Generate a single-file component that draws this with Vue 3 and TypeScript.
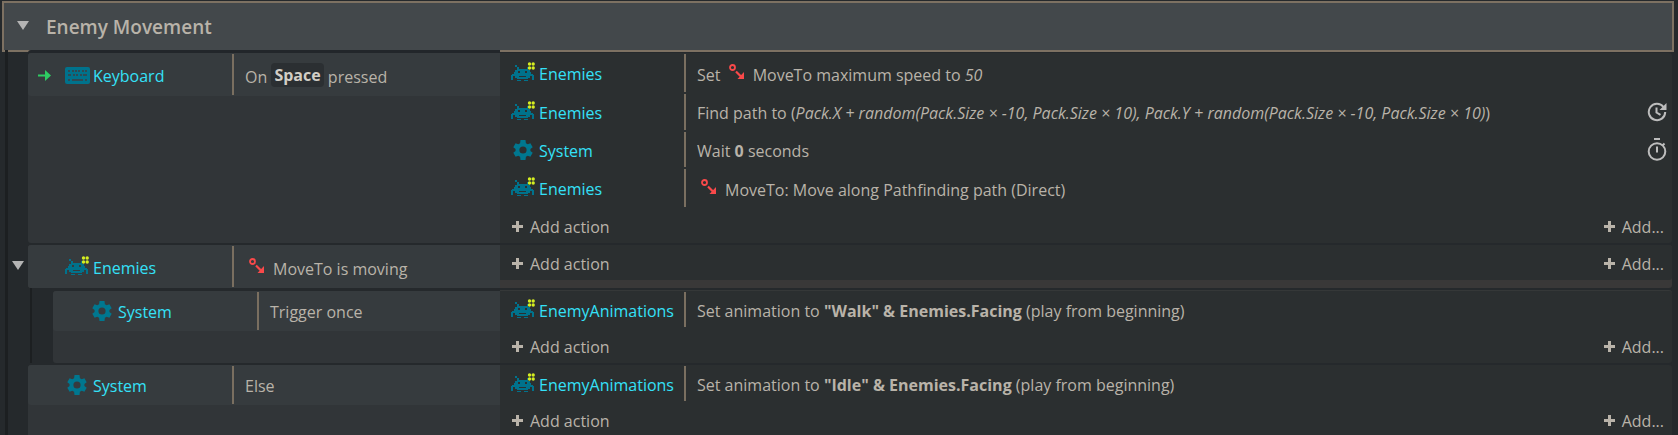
<script setup lang="ts">
import { ref } from 'vue'

type Kind = 'text' | 'strong' | 'em' | 'key' | 'behavior'
interface Part { kind: Kind; value: string }
interface Line {
  icon: 'keyboard' | 'invader' | 'gear'
  object: string
  parts: Part[]
  trigger?: boolean
  badge?: 'async' | 'timer'
}
interface EventBlock {
  id: number
  condition: Line
  actions: Line[]
  sub?: boolean
  parent?: boolean
}

const t = (value: string): Part => ({ kind: 'text', value })
const b = (value: string): Part => ({ kind: 'strong', value })
const i = (value: string): Part => ({ kind: 'em', value })
const key = (value: string): Part => ({ kind: 'key', value })
const behavior: Part = { kind: 'behavior', value: '' }

const groupOpen = ref(true)
const subOpen = ref(true)

const events: EventBlock[] = [
  {
    id: 1,
    condition: { icon: 'keyboard', object: 'Keyboard', trigger: true, parts: [t('On '), key('Space'), t(' pressed')] },
    actions: [
      { icon: 'invader', object: 'Enemies', parts: [t('Set '), behavior, t('MoveTo maximum speed to '), i('50')] },
      {
        icon: 'invader',
        object: 'Enemies',
        parts: [
          t('Find path to ('),
          i('Pack.X + random(Pack.Size × -10, Pack.Size × 10), Pack.Y + random(Pack.Size × -10, Pack.Size × 10)'),
          t(')'),
        ],
        badge: 'async',
      },
      { icon: 'gear', object: 'System', parts: [t('Wait '), b('0'), t(' seconds')], badge: 'timer' },
      { icon: 'invader', object: 'Enemies', parts: [behavior, t('MoveTo: Move along Pathfinding path (Direct)')] },
    ],
  },
  {
    id: 2,
    parent: true,
    condition: { icon: 'invader', object: 'Enemies', parts: [behavior, t('MoveTo is moving')] },
    actions: [],
  },
  {
    id: 3,
    sub: true,
    condition: { icon: 'gear', object: 'System', parts: [t('Trigger once')] },
    actions: [
      {
        icon: 'invader',
        object: 'EnemyAnimations',
        parts: [t('Set animation to '), b('"Walk" & Enemies.Facing'), t(' (play from beginning)')],
      },
    ],
  },
  {
    id: 4,
    condition: { icon: 'gear', object: 'System', parts: [t('Else')] },
    actions: [
      {
        icon: 'invader',
        object: 'EnemyAnimations',
        parts: [t('Set animation to '), b('"Idle" & Enemies.Facing'), t(' (play from beginning)')],
      },
    ],
  },
]

const isTall = (line: Line) => line.parts.some((p) => p.kind === 'behavior' || p.kind === 'key')
</script>

<template>
  <main class="sheet">
    <svg class="defs" aria-hidden="true">
      <symbol id="keyboard" viewBox="0 0 25 17">
        <rect width="25" height="17" rx="2" fill="#00728c" />
        <path
          d="M3 3h2v2H3zM7 3h2v2H7zM10 3h2v2h-2zM13 3h2v2h-2zM17 3h2v2h-2zM20 3h2v2h-2zM3 7h3v2H3zM8 7h2v2H8zM11 7h2v2h-2zM15 7h2v2h-2zM18 7h4v2h-4zM3 12h2v2H3zM7 12h11v2H7zM20 12h2v2h-2z"
          fill="#2f4a54"
        />
      </symbol>
      <symbol id="invader" viewBox="0 0 24 20">
        <path
          fill="#00728c"
          fill-rule="evenodd"
          d="M4 3h2v2H4zM6 5h2v2H6zM16 5h2v2h-2zM6 7h11v1h2v2h1v2h2v1h1v5h-2v-4h-2v2h-2v1H6v-1H4v-2H2v4H0v-5h1v-1h2v-2h1V8h2zM7 9v2h2V9zM14 9v2h2V9zM8 14v1h7v-1zM6 18h4v1H6zM13 18h4v1h-4z"
        />
        <g fill="#d5ee21">
          <circle cx="18.500" cy="2" r="1.700" /><circle cx="22.200" cy="2" r="1.700" />
          <circle cx="18.500" cy="6" r="1.700" /><circle cx="22.200" cy="6" r="1.700" />
        </g>
      </symbol>
      <symbol id="gear" viewBox="0 0 24 24">
        <path
          fill="#00778f"
          d="M19.400 13a7.500 7.500 0 0 0 0-2l2.300-1.800-2.300-4-2.700 1.100a7.400 7.400 0 0 0-1.800-1L14.500 2h-5l-.4 3.300a7.400 7.400 0 0 0-1.800 1L4.600 5.200l-2.300 4L4.600 11a7.500 7.500 0 0 0 0 2l-2.300 1.800 2.300 4 2.700-1.100a7.400 7.400 0 0 0 1.800 1l.4 3.300h5l.4-3.300a7.400 7.400 0 0 0 1.800-1l2.700 1.100 2.300-4zM12 15.600a3.600 3.600 0 1 1 0-7.200 3.600 3.600 0 0 1 0 7.200z"
        />
      </symbol>
      <symbol id="behavior" viewBox="0 0 16 16">
        <circle cx="3.500" cy="3.500" r="2.500" fill="none" stroke="#f9494a" stroke-width="1.800" />
        <path d="M7 7.500l5 5" stroke="#f9494a" stroke-width="2.200" />
        <path d="M15 8v7H8.500z" fill="#f9494a" />
      </symbol>
      <symbol id="trigger" viewBox="0 0 13 11">
        <path d="M0 4.500h7V0l6 5.500L7 11V6.500H0z" fill="#2ecc62" />
      </symbol>
      <symbol id="async" viewBox="0 0 20 20">
        <path d="M16.500 5A8.200 8.200 0 1 0 18.200 10" fill="none" stroke="#bdbdbd" stroke-width="2" />
        <path d="M19.500 1v7h-7z" fill="#bdbdbd" />
        <path d="M9.500 5.500v5l4 2.300" fill="none" stroke="#bdbdbd" stroke-width="2" />
      </symbol>
      <symbol id="timer" viewBox="0 0 20 23">
        <circle cx="10" cy="13.500" r="8.300" fill="none" stroke="#bdbdbd" stroke-width="2" />
        <path d="M7 1h6M10 8.500v6M15.500 7.500l2-2" stroke="#bdbdbd" stroke-width="2" />
      </symbol>
      <symbol id="triangle" viewBox="0 0 12 9">
        <path d="M0 0h12L6 9z" fill="#b4b4b4" />
      </symbol>
    </svg>

    <header class="group">
      <button class="toggle" type="button" aria-label="Toggle group" :aria-expanded="groupOpen" @click="groupOpen = !groupOpen">
        <svg class="triangle"><use href="#triangle" /></svg>
      </button>
      <h1>Enemy Movement</h1>
    </header>

    <section v-if="groupOpen" class="events">
      <template v-for="event in events" :key="event.id">
        <article v-if="!event.sub || subOpen" class="event" :class="{ sub: event.sub, parent: event.parent }">
          <button
            v-if="event.parent"
            class="toggle branch"
            type="button"
            aria-label="Toggle sub-events"
            :aria-expanded="subOpen"
            @click="subOpen = !subOpen"
          >
            <svg class="triangle"><use href="#triangle" /></svg>
          </button>
          <div class="conditions">
            <div class="condition" :class="{ tall: isTall(event.condition) }">
              <div class="object">
                <svg v-if="event.condition.trigger" class="trigger"><use href="#trigger" /></svg>
                <svg :class="event.condition.icon"><use :href="'#' + event.condition.icon" /></svg>
                <span>{{ event.condition.object }}</span>
              </div>
              <p class="description">
                <template v-for="(part, n) in event.condition.parts" :key="n">
                  <svg v-if="part.kind === 'behavior'" class="behavior"><use href="#behavior" /></svg>
                  <kbd v-else-if="part.kind === 'key'">{{ part.value }}</kbd>
                  <span v-else>{{ part.value }}</span>
                </template>
              </p>
            </div>
          </div>
          <div class="actions">
            <div
              v-for="(action, n) in event.actions"
              :key="n"
              class="action"
              :class="{ tall: isTall(action) }"
            >
              <div class="object">
                <svg :class="action.icon"><use :href="'#' + action.icon" /></svg>
                <span>{{ action.object }}</span>
              </div>
              <p class="description">
                <template v-for="(part, m) in action.parts" :key="m">
                  <svg v-if="part.kind === 'behavior'" class="behavior"><use href="#behavior" /></svg>
                  <em v-else-if="part.kind === 'em'">{{ part.value }}</em>
                  <strong v-else-if="part.kind === 'strong'">{{ part.value }}</strong>
                  <span v-else>{{ part.value }}</span>
                </template>
              </p>
              <svg v-if="action.badge" :class="action.badge"><use :href="'#' + action.badge" /></svg>
            </div>
            <div class="add-row">
              <button class="add" type="button"><span class="plus"></span>Add action</button>
              <button class="add" type="button"><span class="plus"></span>Add...</button>
            </div>
          </div>
        </article>
      </template>
    </section>
  </main>
</template>

<style>
body {
  margin: 0;
  background: #25292c;
}
</style>

<style scoped>
.sheet {
  box-sizing: border-box;
  display: flex;
  flex-direction: column;
  height: 100vh;
  overflow: hidden;
  padding: 1px 4px 0 2px;
  background: #25292c;
  color: #b9b3a9;
  font-family: "Open Sans", "Noto Sans", sans-serif;
  font-size: 16px;
  line-height: 22px;
}
.defs {
  position: absolute;
  width: 0;
  height: 0;
}
svg {
  display: block;
  flex: none;
}
button {
  border: 0;
  padding: 0;
  background: none;
  color: inherit;
  font: inherit;
  cursor: pointer;
}
.group {
  flex: none;
  box-sizing: border-box;
  display: flex;
  align-items: center;
  height: 51px;
  padding: 0 0 0 13px;
  border: 2px solid #7d7162;
  background: #43484b;
}
.group h1 {
  margin: 0 0 0 17px;
  font-size: 19px;
  line-height: 28px;
  font-weight: 600;
}
.group .triangle {
  margin-bottom: 3px;
}
.triangle {
  width: 12px;
  height: 9px;
}
.events {
  position: relative;
  flex: none;
  display: flex;
  flex-direction: column;
  gap: 2px;
  margin: -2px 2px 0 3px;
  padding: 3px 0 0 20px;
  border-left: 3px solid #1c1f21;
}
.event {
  position: relative;
  display: flex;
  border-radius: 3px;
}
.event:first-child .conditions {
  box-shadow: 0 -3px 0 #22262a;
}
.sub {
  margin: 1px 0 0 25px;
}
.sub::before {
  content: "";
  position: absolute;
  top: -3px;
  bottom: 0;
  left: -23px;
  width: 2px;
  background: #1c1f21;
}
.sub .actions {
  box-shadow: 0 -1px 0 #353838;
}
.parent {
  background: #393838;
}
.branch {
  position: absolute;
  top: 16px;
  left: -16px;
}
.conditions {
  flex: none;
  width: 472px;
  border-radius: 3px 0 0 3px;
  background: #313538;
}
.sub .conditions {
  width: 447px;
}
.condition,
.action {
  display: flex;
  align-items: center;
}
.condition {
  height: 40px;
  border-radius: 3px 0 0 3px;
  background: #363b3e;
}
.condition.tall {
  height: 43px;
}
.object {
  position: relative;
  box-sizing: border-box;
  display: flex;
  align-items: center;
  gap: 4px;
  padding-top: 2px;
  color: #34e1f8;
}
.condition .object {
  width: 204px;
  padding-left: 37px;
}
.action .object {
  width: 184px;
  padding-left: 11px;
}
.description {
  box-sizing: border-box;
  flex: 1;
  display: flex;
  align-items: center;
  align-self: stretch;
  min-width: 0;
  margin: 1px 0;
  padding: 2px 0 0 11px;
  border-left: 2px solid #7a6f60;
  white-space: pre;
}
.tall .description {
  padding-top: 4px;
}
kbd {
  margin-top: -4px;
  padding: 1px 3px;
  border-radius: 4px;
  background: #2b2f32;
  color: #d2cec6;
  font: inherit;
  font-weight: 700;
}
.keyboard {
  width: 25px;
  height: 17px;
  margin-right: -1px;
}
.invader {
  width: 24px;
  height: 20px;
  margin-bottom: 4px;
}
.gear {
  width: 24px;
  height: 24px;
  margin-bottom: 2px;
}
.trigger {
  position: absolute;
  left: 10px;
  width: 13px;
  height: 11px;
}
.behavior {
  width: 16px;
  height: 16px;
  margin: 0 8px 6px 4px;
}
.actions {
  flex: 1;
  min-width: 0;
  align-self: flex-start;
  border-radius: 0 3px 3px 0;
  background: #2b2f30;
}
.action {
  height: 37px;
}
.action:nth-child(2) {
  height: 38px;
}
.action.tall {
  height: 40px;
}
.async {
  width: 20px;
  height: 20px;
  margin-right: 5px;
}
.timer {
  width: 20px;
  height: 23px;
  margin-right: 5px;
}
.add-row {
  box-sizing: border-box;
  display: flex;
  align-items: center;
  justify-content: space-between;
  height: 35px;
  padding: 2px 8px 0 12px;
}
.add {
  display: flex;
  align-items: center;
  gap: 7px;
}
.plus {
  width: 11px;
  height: 11px;
  background:
    linear-gradient(#b9b3a9, #b9b3a9) center / 11px 3px no-repeat,
    linear-gradient(#b9b3a9, #b9b3a9) center / 3px 11px no-repeat;
}
</style>
